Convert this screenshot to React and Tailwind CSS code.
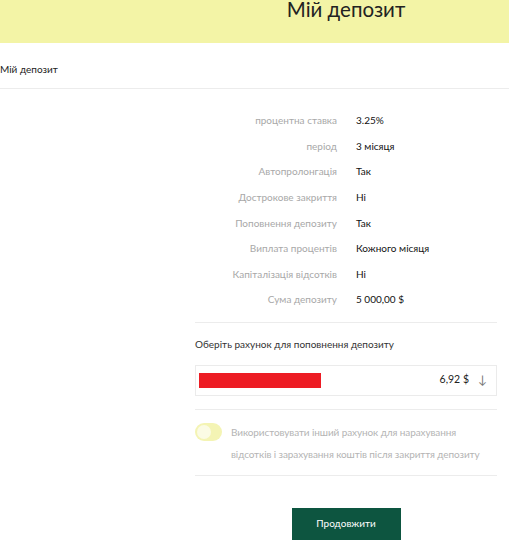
const rows = [
  ["процентна ставка", "3.25%"],
  ["період", "3 місяця"],
  ["Автопролонгація", "Так"],
  ["Дострокове закриття", "Ні"],
  ["Поповнення депозиту", "Так"],
  ["Виплата процентів", "Кожного місяця"],
  ["Капіталізація відсотків", "Ні"],
  ["Сума депозиту", "5 000,00 $"],
];

const App = () => {
  return (
    <div className="w-[509px] h-[550px] overflow-hidden bg-white font-['Lato',sans-serif]">
      {/* header */}
      <div className="h-[43px] bg-[#f3f4a6] flex">
        <div className="w-[195px]" />
        <div className="w-[302px] flex justify-center">
          <h1 className="text-[20.5px] leading-none text-[#222] -mt-[1.5px]">Мій депозит</h1>
        </div>
      </div>

      {/* breadcrumb */}
      <div className="h-[46px] border-b border-[#ececec] flex items-center pt-[8px]">
        <span className="text-[10px] text-[#222]">Мій депозит</span>
      </div>

      <div className="flex">
        <div className="w-[195px]" />
        <div className="w-[302px]">
          {/* details */}
          <div className="pt-[19px] pb-[9px] border-b border-[#ececec]">
            {rows.map(([label, value]) => (
              <div key={label} className="flex h-[25.6px] items-center text-[10px]">
                <div className="w-[142px] text-right text-[#a8a8a8]">{label}</div>
                <div className="ml-[19px] text-[#111]">{value}</div>
              </div>
            ))}
          </div>

          {/* account */}
          <div className="pt-[14px] pb-[13px] border-b border-[#ececec]">
            <div className="text-[10px] text-[#333] leading-[15px]">Оберіть рахунок для поповнення депозиту</div>
            <div className="mt-[13px] h-[31px] border border-[#ebebeb] flex items-center pl-[3px] pr-[9px]">
              <div className="w-[122px] h-[15px] bg-[#ed1c24]" />
              <div className="flex-1" />
              <span className="text-[10.5px] text-[#222]">6,92 $</span>
              <span className="ml-[9px] text-[12px] text-[#777]">↓</span>
            </div>
          </div>

          {/* toggle */}
          <div className="flex items-start pt-[13px] pb-[10px] border-b border-[#ececec]">
            <div className="w-[27px] h-[18px] rounded-full bg-[#f4f4b4] flex items-center pl-[2px] shrink-0">
              <div className="w-[14px] h-[14px] rounded-full bg-[#fbfbe4]" />
            </div>
            <div className="ml-[9px] text-[10px] tracking-[-0.1px] leading-[22px] text-[#b4b4b4] -mt-[2px] whitespace-nowrap">
              Використовувати інший рахунок для нарахування
              <br />
              відсотків і зарахування коштів після закриття депозиту
            </div>
          </div>

          {/* button */}
          <div className="flex justify-center pt-[32px]">
            <button className="w-[109px] h-[32px] bg-[#0d5540] text-white text-[10px]">Продовжити</button>
          </div>
        </div>
      </div>
    </div>
  );
};

export default App;
